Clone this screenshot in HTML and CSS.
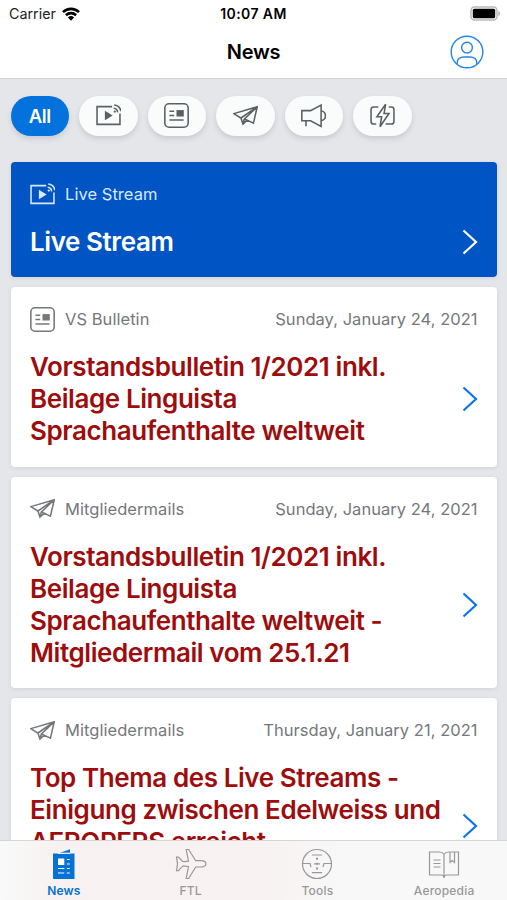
FILE: index.html
```
<!DOCTYPE html>
<html lang="de">
<head>
    <meta charset="UTF-8">
    <meta name="viewport" content="width=device-width, initial-scale=1.0">
    <title>News</title>
    <link rel="stylesheet" href="styles.css">
</head>
<body>
    <!-- shared icons -->
    <svg class="sprite">
        <symbol id="stream" viewBox="0 0 24 24">
            <path d="M15.5 3.5H1v17h22V10"/>
            <path class="fill" d="M8.500 7.500v9l7.500-4.500z"/>
            <path d="M17 5a4 4 0 0 1 3.700 4M17.500 1.900a7 7 0 0 1 6.300 6"/>
            <circle class="fill" cx="18" cy="8.200" r="1.100"/>
        </symbol>
        <symbol id="bulletin" viewBox="0 0 24 24">
            <rect x=".8" y=".8" width="22.400" height="22.400" rx="4"/>
            <path d="M5.200 8h4.600M5.200 12h4.600M5.200 16.400h13.600"/>
            <path class="fill" d="M12 6.800h7v6.200h-7z"/>
        </symbol>
        <symbol id="plane" viewBox="0 0 24 24">
            <path d="M.8 10.200L23.300 3.600 19.600 19.300 13.500 16.400 9.600 20.200 7.600 14.400zM23.300 3.600L7.600 14.400M23.300 3.600L10.800 15.500 9.600 20.200M10.800 15.500l2.700.9"/>
        </symbol>
        <symbol id="horn" viewBox="0 0 24 24">
            <path d="M.8 7.300h8.400L19.300 2v20.500L9.200 17H.8zM4.800 17v5.200M19.300 7.600c5.500 0 5.500 9.300 0 9.300"/>
        </symbol>
        <symbol id="flash" viewBox="0 0 24 24">
            <path d="M8 3.800H3.500Q1 3.800 1 6.300v11.400q0 2.500 2.500 2.500H6M18 3.800h2.500q2.500 0 2.500 2.500v11.400q0 2.500-2.500 2.500H15"/>
            <path d="M15 1.200L6.600 13.200h4.600L9.600 22.800 18.200 10h-4.700z"/>
        </symbol>
    </svg>

    <header class="header">
        <div class="status-bar">
            <div class="carrier">Carrier
                <svg class="wifi" viewBox="0 0 18 14">
                    <path d="M1 5.100a11.500 11.500 0 0 1 16 0M3.900 8.200a7.400 7.400 0 0 1 10.200 0"/>
                    <path class="dot" d="M9 13.800L5.900 10.500a4.500 4.500 0 0 1 6.200 0z"/>
                </svg>
            </div>
            <div class="time">10:07 AM</div>
            <svg class="battery" viewBox="0 0 31 15">
                <rect class="shell" x="1" y="1" width="26" height="13" rx="3.500"/>
                <rect x="2.800" y="2.800" width="22.400" height="9.400" rx="1.500"/>
                <path class="cap" d="M28.300 5q2 .8 2 2.500t-2 2.500z"/>
            </svg>
        </div>
        <div class="nav-bar">
            <h1>News</h1>
            <svg class="profile" viewBox="0 0 34 34">
                <circle cx="17" cy="17" r="15.800"/>
                <circle cx="17" cy="12.600" r="5.400"/>
                <path d="M7.200 29.300V28q0-6 7-6h5.600q7 0 7 6v1.300"/>
            </svg>
        </div>
    </header>

    <main class="feed">
        <div class="filters">
            <div class="pill active">All</div>
            <div class="pill"><svg class="icon"><use href="#stream"/></svg></div>
            <div class="pill"><svg class="icon"><use href="#bulletin"/></svg></div>
            <div class="pill"><svg class="icon"><use href="#plane"/></svg></div>
            <div class="pill"><svg class="icon"><use href="#horn"/></svg></div>
            <div class="pill"><svg class="icon"><use href="#flash"/></svg></div>
        </div>

        <article class="card live">
            <div class="meta">
                <svg class="icon"><use href="#stream"/></svg>
                <span class="category">Live Stream</span>
            </div>
            <div class="content">
                <h2>Live Stream</h2>
                <svg class="chevron" viewBox="0 0 16 26"><path d="M1.500 1.500L14 13 1.500 24.500"/></svg>
            </div>
        </article>

        <article class="card">
            <div class="meta">
                <svg class="icon"><use href="#bulletin"/></svg>
                <span class="category">VS Bulletin</span>
                <span class="date">Sunday, January 24, 2021</span>
            </div>
            <div class="content">
                <h2>Vorstandsbulletin 1/2021 inkl.<br>Beilage Linguista<br>Sprachaufenthalte weltweit</h2>
                <svg class="chevron" viewBox="0 0 16 26"><path d="M1.500 1.500L14 13 1.500 24.500"/></svg>
            </div>
        </article>

        <article class="card">
            <div class="meta">
                <svg class="icon"><use href="#plane"/></svg>
                <span class="category">Mitgliedermails</span>
                <span class="date">Sunday, January 24, 2021</span>
            </div>
            <div class="content">
                <h2>Vorstandsbulletin 1/2021 inkl.<br>Beilage Linguista<br>Sprachaufenthalte weltweit -<br>Mitgliedermail vom 25.1.21</h2>
                <svg class="chevron" viewBox="0 0 16 26"><path d="M1.500 1.500L14 13 1.500 24.500"/></svg>
            </div>
        </article>

        <article class="card tall">
            <div class="meta">
                <svg class="icon"><use href="#plane"/></svg>
                <span class="category">Mitgliedermails</span>
                <span class="date">Thursday, January 21, 2021</span>
            </div>
            <div class="content">
                <h2>Top Thema des Live Streams -<br>Einigung zwischen Edelweiss und<br>AEROPERS erreicht</h2>
                <svg class="chevron" viewBox="0 0 16 26"><path d="M1.500 1.500L14 13 1.500 24.500"/></svg>
            </div>
        </article>
    </main>

    <nav class="tab-bar">
        <div class="tab selected">
            <svg viewBox="0 0 32 32">
                <path class="paper" d="M5 5.500h5L22 1.200V5.500h4.500V31H5z"/>
                <path class="gap" d="M10 5.300h12"/>
                <path class="photo" d="M10 10.500h6.300V17H10z"/>
                <path class="lines" d="M18.800 11.500h3M18.800 16h3M10 20.500h6.300M18.800 20.500h3M10 25h6.300M18.800 25h3"/>
            </svg>
            <span>News</span>
        </div>
        <div class="tab">
            <svg viewBox="0 0 32 32">
                <path d="M1.500 9h2l4 4.500q3 .3 6-.3L11.200 1.500h2.500l7 11.200H26c6.500 0 6.500 6.300 0 6.300h-5.300l-7 11.500h-2.500l2.300-12q-3-.6-6-.3l-4 4.500h-2l1-6.900z"/>
            </svg>
            <span>FTL</span>
        </div>
        <div class="tab">
            <svg viewBox="0 0 32 32">
                <circle cx="16" cy="16" r="14.500"/>
                <path d="M11 7h10M11 24.700h10M1.500 15.500h7.500l1 3.500M30.500 15.500H23l-1 3.500M13 15.800h6"/>
                <path class="dots" d="M15 10.800h2M15 20.500h2M15.200 15.800h1.600"/>
            </svg>
            <span>Tools</span>
        </div>
        <div class="tab">
            <svg viewBox="0 0 32 32">
                <path d="M16 6.500Q14.500 4 11.500 4H1.500v23h11.500q3 0 3 3 0-3 3-3h11.500V4h-10Q17.500 4 16 6.500zV29"/>
                <path d="M5.500 12h7M5.500 15.500h7M5.500 19h7M22 4v10.500l2.200-2 2.300 2V4"/>
            </svg>
            <span>Aeropedia</span>
        </div>
    </nav>
</body>
</html>
```

FILE: styles.css
```
* {
  box-sizing: border-box;
}

body {
  margin: 0;
  height: 900px;
  display: flex;
  flex-direction: column;
  overflow: hidden;
  font-family: Inter, "Liberation Sans", sans-serif;
  background: #e5e6ea;
}

svg {
  display: block;
  flex: none;
  fill: none;
  stroke: currentColor;
}

.sprite {
  position: absolute;
  width: 0;
  height: 0;
}

.fill {
  fill: currentColor;
  stroke: none;
}

/* header */
.header {
  flex: none;
  height: 79px;
  background: #fff;
  border-bottom: 1px solid #d3d4d6;
}

.status-bar {
  display: grid;
  grid-template-columns: 1fr auto 1fr;
  align-items: center;
  height: 27px;
  padding: 0 6px 0 9px;
}

.carrier {
  display: flex;
  align-items: center;
  gap: 6px;
  font-size: 14.300px;
  color: #222;
}

.wifi {
  width: 18px;
  height: 14px;
  color: #000;
  stroke-width: 2.600;
}

.wifi .dot {
  fill: #000;
  stroke: none;
}

.time {
  margin-right: 3px;
  font-weight: 600;
  font-size: 14px;
  letter-spacing: 0.400px;
}

.battery {
  width: 31px;
  height: 15px;
  justify-self: end;
  fill: #000;
  stroke: none;
}

.battery .shell {
  fill: #fff;
  stroke: #b9b9b9;
  stroke-width: 1.500;
}

.battery .cap {
  fill: #b9b9b9;
}

.nav-bar {
  display: grid;
  grid-template-columns: 1fr auto 1fr;
  align-items: center;
  height: 50px;
  padding: 0 23px;
}

.nav-bar h1 {
  grid-column: 2;
  margin: 0;
  font-size: 20px;
  font-weight: 600;
  letter-spacing: -0.200px;
}

.profile {
  width: 34px;
  height: 34px;
  justify-self: end;
  color: #2384ea;
  stroke-width: 1.400;
}

/* filters */
.feed {
  flex: 1;
  min-height: 0;
  overflow: hidden;
  padding: 17px 10px 0 10.500px;
}

.filters {
  display: flex;
  gap: 10px;
  margin-bottom: 26.500px;
}

.pill {
  display: flex;
  align-items: center;
  justify-content: center;
  width: 58.500px;
  height: 39.500px;
  border-radius: 20px;
  background: #fafcfc;
  color: #5c6062;
  box-shadow: 0 3px 5px rgba(60, 70, 80, 0.16);
}

.pill.active {
  background: #0472dc;
  color: #fff;
  font-size: 18.500px;
  font-weight: 600;
  letter-spacing: -0.300px;
}

.icon {
  width: 25px;
  height: 25px;
  stroke-width: 1.500;
}

/* cards */
.card {
  margin-bottom: 10px;
  padding: 20px 19.500px 19.500px;
  border-radius: 4px;
  background: #fff;
  box-shadow: 0 1px 4px rgba(60, 70, 90, 0.12);
}

.meta {
  display: flex;
  align-items: center;
  height: 24px;
  font-size: 16.500px;
  color: #75787b;
}

.category {
  margin-left: 10px;
  letter-spacing: 0.050px;
}

.date {
  margin-left: auto;
  letter-spacing: 0.030px;
}

.content {
  display: flex;
  align-items: center;
  justify-content: space-between;
  margin-top: 20px;
  color: #0a74f0;
}

.content h2 {
  margin: 0;
  font-size: 26px;
  line-height: 32px;
  font-weight: 600;
  letter-spacing: -0.420px;
  white-space: nowrap;
  color: #9e0d0d;
}

.tall h2 {
  min-height: 128px;
}

.chevron {
  width: 16px;
  height: 26px;
  stroke-width: 2.200;
}

.live {
  padding-bottom: 19px;
  background: #0054c3;
}

.live .meta {
  color: #d9e8ff;
}

.live .content,
.live h2 {
  color: #fff;
}

/* tab bar */
.tab-bar {
  flex: none;
  display: grid;
  grid-template-columns: repeat(4, 1fr);
  height: 60px;
  border-top: 1px solid #d8d5d6;
  background: linear-gradient(90deg, #f9f9f9 0%, #f8f1f1 12%, #f8f2f2 52%, #f8f8f8 68%, #f8f8f8 100%);
}

.tab {
  display: flex;
  flex-direction: column;
  align-items: center;
  padding-top: 7px;
  padding-left: 1px;
  font-size: 12px;
  font-weight: 500;
  letter-spacing: 0.200px;
  color: #98989a;
}

.tab svg {
  width: 32px;
  height: 32px;
  stroke-width: 1.200;
}

.tab span {
  margin-top: 3px;
  line-height: 15px;
}

.tab .dots {
  stroke-width: 2;
}

.tab.selected {
  color: #0472d4;
  font-weight: 600;
}

.tab .paper {
  fill: #0472d4;
  stroke: none;
}

.tab .gap,
.tab .lines {
  stroke: #fff;
}

.tab .photo {
  fill: #fff;
  stroke: none;
}
```
